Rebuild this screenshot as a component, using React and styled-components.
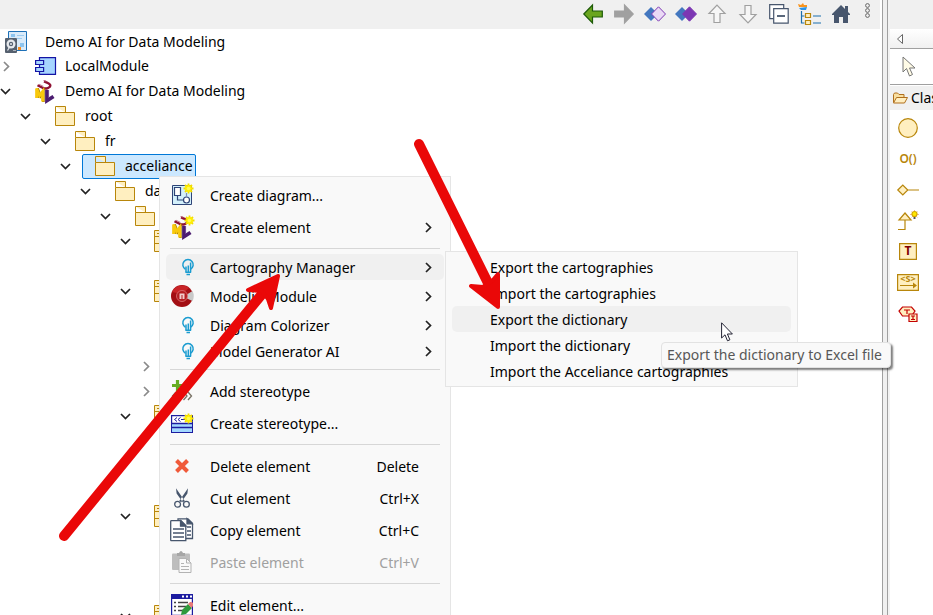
import React from "react";
import styled, { createGlobalStyle } from "styled-components";

const GlobalStyle = createGlobalStyle`
  * { box-sizing: border-box; }
  body {
    margin: 0;
    background: #fff;
    color: #000;
    font: 14px/20px "Noto Sans", "Open Sans", sans-serif;
    overflow: hidden;
  }
  button {
    font: inherit;
    color: inherit;
    background: none;
    border: 0;
    padding: 0;
    margin: 0;
    text-align: left;
  }
  svg { display: block; flex: none; overflow: visible; }
`;

/* ---------- layout ---------- */

const Window = styled.div`
  display: flex;
  height: 100vh;
  position: relative;
  overflow: hidden;
`;

const Explorer = styled.main`
  flex: 1;
  min-width: 0;
  padding-right: 2px;
  overflow: hidden;
`;

const Toolbar = styled.div`
  display: flex;
  justify-content: flex-end;
  height: 29px;
  padding-right: 5px;
  background: #f0f0f0;
`;

const ToolButton = styled.button`
  display: flex;
  align-items: center;
  justify-content: center;
  width: ${(p) => (p.$narrow ? 15 : 31)}px;
  height: ${(p) => (p.$narrow ? 21 : 28)}px;
  margin-left: ${(p) => (p.$narrow ? 4 : 0)}px;
`;

const Splitter = styled.div`
  width: 6px;
  background: #f0f0f0;
  border: solid #a0a0a0;
  border-width: 0 1px;
`;

const Palette = styled.aside`
  width: 45px;
  display: flex;
  flex-direction: column;
  border-left: 2px solid #f3f3f3;
  overflow: hidden;
  white-space: nowrap;
`;

const PaletteTop = styled.div`
  height: 29px;
  background: #f0f0f0;
`;

const PaletteHeader = styled.button`
  height: 20px;
  padding-left: 7px;
  display: flex;
  align-items: center;
  background: linear-gradient(#fff, #f0f0f0);
  border-bottom: 1px solid #a0a0a0;
`;

const SelectTool = styled.button`
  height: 36px;
  padding-left: 12px;
  display: flex;
  align-items: center;
  border-bottom: 1px solid #a0a0a0;
`;

const PaletteDrawer = styled.button`
  height: 24px;
  margin-top: 1px;
  padding-left: 3px;
  display: flex;
  align-items: center;
  gap: 3px;
  background: #f0f0f0;
`;

const PaletteList = styled.div`
  display: flex;
  flex-direction: column;
  padding: 2px 0 0 5px;
`;

const PaletteTool = styled.button`
  display: flex;
  align-items: center;
  justify-content: center;
  width: 26px;
  height: 31px;
`;

/* ---------- tree ---------- */

const Tree = styled.div`
  display: flex;
  flex-direction: column;
`;

const ProjectRow = styled.div`
  display: flex;
  align-items: center;
  gap: 18px;
  height: 25px;
  padding-left: 5px;
`;

const TreeRow = styled.div`
  display: flex;
  align-items: center;
  height: 25px;
  flex: none;
  padding-left: ${(p) => p.$depth * 20}px;
`;

const Toggle = styled.button`
  width: 12px;
  height: 20px;
  margin-right: 10px;
  display: flex;
  align-items: center;
  justify-content: center;
`;

const Node = styled.button`
  display: flex;
  align-items: center;
  gap: 10px;
  height: 25px;
  padding: 0 2px 1px 12px;
  white-space: nowrap;
  border: 1px solid ${(p) => (p.$selected ? "#0078d7" : "transparent")};
  border-radius: 2px;
  background: ${(p) => (p.$selected ? "#cce8ff" : "transparent")};
`;

const NodeIcon = styled.span`
  width: 20px;
  display: flex;
  justify-content: center;
`;

/* ---------- menus ---------- */

const Menu = styled.div`
  position: absolute;
  left: ${(p) => p.$x}px;
  top: ${(p) => p.$y}px;
  width: ${(p) => p.$width}px;
  padding: 2px 6px;
  display: flex;
  flex-direction: column;
  background: #f9f9f9;
  border: 1px solid #e5e5e5;
`;

const MenuItem = styled.button`
  display: flex;
  align-items: center;
  flex: none;
  height: ${(p) => (p.$compact ? 26 : 32)}px;
  padding: ${(p) => (p.$plain ? "2px 13px 0 38px" : "0 12px 0 3px")};
  border-radius: 5px;
  white-space: nowrap;
  background: ${(p) => (p.$active ? "#f0f0f0" : "transparent")};
  &:disabled { color: #a0a0a0; }
`;

const MenuIcon = styled.span`
  width: 26px;
  margin-right: 15px;
  display: flex;
  justify-content: ${(p) => (p.$small ? "flex-end" : "center")};
`;

const MenuLabel = styled.span`
  flex: 1;
  padding-top: 2px;
`;

const Shortcut = styled.span`
  margin-right: 13px;
  padding-top: 2px;
`;

const Separator = styled.div`
  flex: none;
  height: 1px;
  margin: 5px 4px;
  background: #d7d7d7;
`;

const Tooltip = styled.div`
  position: absolute;
  left: 661px;
  top: 342px;
  padding: 2px 8px 2px 5px;
  color: #575757;
  background: #f9f9f9;
  border: 1px solid #e2e2e2;
  border-radius: 4px;
  box-shadow: 2px 2px 2px rgba(0, 0, 0, 0.5);
  white-space: nowrap;
`;

const Pointer = styled.svg`
  position: absolute;
  left: 721px;
  top: 322px;
`;

const Annotations = styled.svg`
  position: absolute;
  left: 0;
  top: 0;
  pointer-events: none;
`;

/* ---------- icons ---------- */

const ChevronDown = () => (
  <svg width="12" height="8" viewBox="0 0 12 8" fill="none" stroke="#222" strokeWidth="1.7">
    <path d="M1 1 5.500 5.500 10 1" />
  </svg>
);
const ChevronRight = ({ color = "#222" }) => (
  <svg width="7" height="11" viewBox="0 0 7 11" fill="none" stroke={color} strokeWidth="1.7">
    <path d="M1 1l4.500 4.500L1 10" />
  </svg>
);
const Folder = () => (
  <svg width="20" height="20" viewBox="0 0 20 20" fill="#ffefc0" stroke="#b8860b">
    <path d="M.5 .5h10v6M.5 .5v6" />
    <path d="M.5 6.500h19v13H.5z" />
  </svg>
);
const ClassBox = () => (
  <svg width="22" height="22" viewBox="0 0 22 22" fill="#ffefc0" stroke="#b8860b">
    <path d="M.5 .5h21v21H.5zM.5 6.500h21M.5 13.500h21" />
    <path d="M3 3.500h3" />
  </svg>
);
const ProjectIcon = () => (
  <svg width="22" height="22" viewBox="0 0 22 22">
    <path d="M3.500 .5h18v19h-18z" fill="#d9ebfa" stroke="#1d70b7" />
    <path d="M6 3h4v3H6zM15 12h4v4h-4z" fill="#8cc4ef" />
    <path d="M12 4h7v1h-7zM12 7h5v1h-5z" fill="#9ccbf0" />
    <path d="M13 16h3v3h-3z" fill="#f58c1f" />
    <rect x="0" y="7" width="12" height="15" rx="1" fill="#56616f" />
    <circle cx="6" cy="13" r="4.500" fill="#e6e9ed" />
    <circle cx="6" cy="13" r="2.200" fill="#56616f" />
    <circle cx="6" cy="13" r="1" fill="#e6e9ed" />
    <path d="M2.500 19.500l2.500-4" stroke="#e6e9ed" strokeWidth="1.200" />
    <path d="M8 19.500h3" stroke="#aeb6bf" />
  </svg>
);
const ModuleIcon = () => (
  <svg width="21" height="18" viewBox="0 0 21 18" fill="#a6d5ff" stroke="#1414a5" strokeWidth="1.200">
    <path d="M4.500 .6h16v16.800h-16z" />
    <path d="M.6 3.500h8v4h-8zM.6 10.500h8v4h-8z" />
  </svg>
);
const Spark = () => (
  <g>
    <path d="M17.500 -.5v10M12.500 4.500h10M14 1l7 7M21 1l-7 7" stroke="#f3dc00" strokeWidth="1.800" />
    <circle cx="17.500" cy="4.500" r="3.400" fill="#ffee00" />
    <circle cx="17.500" cy="4.500" r="1.800" fill="#fffb55" />
  </g>
);
const UmlLogo = ({ spark }) => (
  <svg width="20" height="23" viewBox="0 0 20 23" fill="none">
    <path d="M2.500 5.200 8 8c3 1.300 7.500-.3 7.300-2.800C15.200 3.800 12 2.500 9 1.300" stroke="#8f1233" strokeWidth="2.400" />
    <path d="M4 4.200 8.500 6.400M8.500 .5l3 .8" stroke="#b9637a" strokeWidth=".8" />
    <path d="M2.600 18V8.500l3 7.500 2.800-4.500V22" stroke="#a87f00" strokeWidth="2.600" />
    <path d="M1.600 18V8.500l3 7 3-4V21.500" stroke="#f8c80c" strokeWidth="2.900" />
    <path d="M12 10v10.500l6.500-4" stroke="#4b1c70" strokeWidth="3.800" />
    <path d="M13.600 10v8" stroke="#7c52a0" strokeWidth=".8" />
    {spark && <Spark />}
  </svg>
);
const DiagramIcon = () => (
  <svg width="22" height="22" viewBox="0 0 22 22">
    <path d="M1.500 1.500h19v19h-19z" fill="#d3f0fb" stroke="#2f4478" />
    <g fill="#fff" stroke="#2f4478" strokeWidth="1.200">
      <path d="M3.500 3.500h6v8h-6z" />
      <path d="M6.500 11.500v4.500h6" fill="none" />
      <circle cx="15.500" cy="16" r="3" />
      <path d="M15.500 9v4" stroke="#7d8db4" />
    </g>
    <Spark />
  </svg>
);
const Bulb = () => (
  <svg width="13" height="17" viewBox="0 0 13 17" fill="none" stroke="#1b9cd0">
    <path d="M3.500 10.300a5.200 5.200 0 1 1 5 0" strokeWidth="1.500" />
    <path d="M4 7.500v6M6.300 6.500v7M8.600 3.500v10" strokeWidth="1.500" />
    <path d="M3.500 13.300h5.500M4.500 15.500h3.500" strokeWidth="1.500" />
  </svg>
);
const ModelioIcon = () => (
  <svg width="22" height="22" viewBox="0 0 22 22">
    <circle cx="11" cy="11" r="11" fill="#a30f14" />
    <path d="M1 7A11 11 0 0 1 18 3L11 9z" fill="#c92427" />
    <path d="M15 10l6.500-4a11 11 0 0 1 0 10L15 13z" fill="#c9c9c9" />
    <circle cx="11" cy="11" r="5.500" fill="#b41c20" stroke="#dc7476" strokeWidth=".8" />
    <path d="M8.500 8.500h5v5.500h-1.500v-4h-.5v4h-1v-4h-.5v4H8.500z" fill="#f0cccc" />
  </svg>
);
const AddStereotypeIcon = () => (
  <svg width="22" height="22" viewBox="0 0 22 22" fill="none">
    <path d="M6.500 0v11M1 5.500h11" stroke="#66ad22" strokeWidth="3.200" />
    <path d="M5 12 1.500 16 5 20M9 12l-3.500 4L9 20M12.500 12l3.500 4-3.500 4M17 12l3.500 4-3.500 4" stroke="#777064" strokeWidth="1.300" />
  </svg>
);
const CreateStereotypeIcon = () => (
  <svg width="22" height="19" viewBox="0 0 22 19">
    <path d="M.6 1.600h20.800v16.800H.6z" fill="#fff" stroke="#1c1ca0" strokeWidth="1.200" />
    <path d="M1 9.500h20v8.500H1z" fill="#a3d8ff" />
    <path d="M1 9.500h20M1 13.500h20" stroke="#1c1ca0" strokeWidth="1.300" />
    <path d="M6 3.500 3.500 5.500 6 7.500M9.500 3.500 7 5.500l2.500 2M10 5.500h4" fill="none" stroke="#1c1ca0" />
    <Spark />
  </svg>
);
const DeleteIcon = () => (
  <svg width="16" height="16" viewBox="0 0 16 16" stroke="#f05a3a" strokeWidth="4">
    <path d="M2.500 2.500l11 11M13.500 2.500l-11 11" />
  </svg>
);
const CutIcon = () => (
  <svg width="16" height="20" viewBox="0 0 16 20" fill="none" stroke="#47566d">
    <path d="M2 .3 10.800 13l-2 1.200L2.600 5.500zM14 .3 5.200 13l2 1.200 6.200-8.700z" fill="#47566d" stroke="none" />
    <circle cx="3.600" cy="16.300" r="2.900" strokeWidth="1.300" fill="#f9f9f9" />
    <circle cx="12.400" cy="16.300" r="2.900" strokeWidth="1.300" fill="#f9f9f9" />
  </svg>
);
const CopyIcon = () => (
  <svg width="24" height="24" viewBox="0 0 24 24" fill="#fff" stroke="#47566d" strokeWidth="1.300">
    <path d="M8 .8h10l4.500 4.500v15.200H8z" />
    <path d="M17 .8v5h5z" fill="#47566d" />
    <path d="M17 9h4M17 13h4M17 17h4" strokeWidth="1.600" />
    <path d="M1.500 2.700h9.500l4.800 4.800v15.200H1.500q-.8 0-.8-.8V3.500q0-.8.8-.8z" />
    <path d="M10.500 2.700v5.500h5.300z" fill="#47566d" />
    <path d="M3 11h11M3 15h11M3 19h11" strokeWidth="1.700" />
  </svg>
);
const PasteIcon = () => (
  <svg width="20" height="22" viewBox="0 0 20 22">
    <path d="M1 2.500h16q1 0 1 1V19H1q-1 0-1-1V3.500q0-1 1-1z" fill="#bdbdbd" />
    <path d="M5 5V2h2q2-4 4 0h2v3z" fill="#a6a6a6" />
    <path d="M7 7.500h7.500l4.500 4.500v9.500H7z" fill="#f9f9f9" stroke="#b3b3b3" />
    <path d="M14.500 7.500V12H19M9 12.500h3M9 15.500h8M9 18.500h8" fill="none" stroke="#b3b3b3" />
  </svg>
);
const EditIcon = () => (
  <svg width="22" height="22" viewBox="0 0 22 22">
    <path d="M.6 .6h20.800v20.800H.6z" fill="#fff" stroke="#1c1ca0" strokeWidth="1.200" />
    <path d="M0 0h22v5H0z" fill="#1c1ca0" />
    <path d="M11 1.500h2v2h-2zM15 1.500h2v2h-2zM19 1.500h2v2h-2z" fill="#fff" />
    <path d="M3 8.500h2M7 8.500h10M3 12.500h2M7 12.500h8M3 16.500h2M7 16.500h5" stroke="#444" strokeWidth="1.700" />
    <path d="M10 21l1-5 6-6 4 4-6 6z" fill="#2f9a3c" />
    <path d="M17 10l2-2q2-.5 3 1v3l-1.500 2z" fill="#e87979" />
  </svg>
);

const Arrow = ({ fill, stroke, turn = 0 }) => (
  <svg width="20" height="20" viewBox="0 0 20 20">
    <path
      d="M.8 10 9.500 1v6h9.800v6H9.500V19z"
      transform={`rotate(${turn} 10 10)`}
      fill={fill}
      stroke={stroke}
      strokeWidth="1.200"
    />
  </svg>
);
const ThinArrow = ({ turn = 0 }) => (
  <svg width="18" height="20" viewBox="0 0 18 20">
    <path
      d="M9 1.200 17 9.500h-5v9H6v-9H1z"
      transform={`rotate(${turn} 9 10)`}
      fill="#f6f6f6"
      stroke="#a0a0a0"
      strokeWidth="1.200"
    />
  </svg>
);
const Diamonds = ({ fill }) => (
  <svg width="22" height="16" viewBox="0 0 22 16">
    <path d="M0 8l7-7 7 7-7 7z" fill="#4377bf" />
    <path d="M7.500 8 14.500 .8l7 7.200-7 7.200z" fill={fill} stroke="#7c37b3" />
  </svg>
);
const CollapseIcon = () => (
  <svg width="20" height="20" viewBox="0 0 20 20" fill="#fff" stroke="#47566d" strokeWidth="1.200">
    <path d="M.7 .7h14v14h-14z" />
    <path d="M4.700 4.700h14.500v14.500H4.700z" />
    <path d="M8 12h8" strokeWidth="1.800" />
  </svg>
);
const TreeIcon = () => (
  <svg width="23" height="22" viewBox="0 0 23 22" fill="none">
    <path d="M0 1l3 1 2-2 1 2h3v2H1z" fill="#f7931e" />
    <path d="M1 5l8-1-1 3H3z" fill="#2a93e8" />
    <path d="M3.500 8v12h3M3.500 13h3M15 13h8M15 20h8" stroke="#1b6fae" strokeWidth="1.200" />
    <path d="M7.500 10.500h5v4h-5zM7.500 17.500h5v4h-5z" fill="#ffefc0" stroke="#b8860b" strokeWidth="1.200" />
  </svg>
);
const HomeIcon = () => (
  <svg width="18" height="18" viewBox="0 0 18 18" fill="#47566d">
    <path d="M9 0l4 4V1h3v6l2 2v1h-2v8h-5v-6H7v6H2v-8H0V9z" />
  </svg>
);
const MoreIcon = () => (
  <svg width="5" height="15" viewBox="0 0 5 15" fill="none" stroke="#666">
    <circle cx="2.500" cy="2.500" r="1.900" />
    <circle cx="2.500" cy="7.500" r="1.900" />
    <circle cx="2.500" cy="12.500" r="1.900" />
  </svg>
);

const PaletteText = styled.text`
  font-family: "Noto Sans", sans-serif;
  font-size: ${(p) => p.$size}px;
  font-weight: ${(p) => p.$weight || 700};
  text-anchor: middle;
`;

const InstanceIcon = () => (
  <svg width="20" height="20" viewBox="0 0 20 20">
    <circle cx="10" cy="10" r="9.300" fill="#ffefc0" stroke="#b8860b" strokeWidth="1.200" />
  </svg>
);
const OperationIcon = () => (
  <svg width="20" height="16" viewBox="0 0 20 16" fill="#b8860b">
    <PaletteText $size={12} $weight={600} x="10" y="12">O()</PaletteText>
  </svg>
);
const AssociationIcon = () => (
  <svg width="22" height="12" viewBox="0 0 22 12" fill="#ffefc0" stroke="#b8860b" strokeWidth="1.200">
    <path d="M.8 6l5-5 5 5-5 5zM11 6h11" />
  </svg>
);
const GeneralizationIcon = () => (
  <svg width="22" height="22" viewBox="0 0 22 22" fill="none" stroke="#b8860b" strokeWidth="1.200">
    <path d="M8 3 14 10H2z" fill="#ffefc0" />
    <path d="M8 10v9.500H1" />
    <path d="M17.500 0v9M13 4.500h9M14.500 1.500l6 6M20.500 1.500l-6 6" stroke="#e3a38a" strokeWidth=".8" />
    <circle cx="17.500" cy="4" r="2.500" fill="#ffe800" stroke="#d5a900" />
    <path d="M16.500 8h2" stroke="#555" strokeWidth="2" />
  </svg>
);
const TemplateIcon = () => (
  <svg width="18" height="17" viewBox="0 0 18 17">
    <path d="M.6 .6h16.800v15.800H.6z" fill="#ffefc0" stroke="#b8860b" strokeWidth="1.200" />
    <PaletteText $size={12} x="9" y="12" fill="#800000">T</PaletteText>
  </svg>
);
const StereotypeLinkIcon = () => (
  <svg width="22" height="17" viewBox="0 0 22 17">
    <path d="M.6 .6h20.800v15.800H.6z" fill="#ffefc0" stroke="#b8860b" strokeWidth="1.200" />
    <PaletteText $size={9} x="11" y="8" fill="#b8860b">&lt;S&gt;</PaletteText>
    <path d="M3 11.500h14" stroke="#b8860b" />
    <path d="M16 8.500l4 3-4 3z" fill="#b8860b" />
  </svg>
);
const TaggedIcon = () => (
  <svg width="20" height="16" viewBox="0 0 20 16" stroke="#c40000" strokeWidth="1.200" fill="#ffefc0">
    <path d="M4.500 1h9l3.500 4-3.500 5h-9L1 5z" />
    <path d="M6 4h6M9 4v4" />
    <path d="M11 8h8v7.500h-8zM13 10h4M15 10v4M13 13.500h4" />
  </svg>
);
const OpenFolderIcon = () => (
  <svg width="15" height="12" viewBox="0 0 15 12" fill="#f8dfa0" stroke="#b06f1c">
    <path d="M.5 10.500v-8l1-1.500h3l1.500 1.500h5v3" />
    <path d="M.5 11l3-5.500h11l-3 5.500z" fill="#ffeec0" />
  </svg>
);

/* ---------- data ---------- */

const treeRows = [
  { depth: 0, state: "closed", icon: <ModuleIcon />, label: "LocalModule" },
  { depth: 0, state: "open", icon: <UmlLogo />, label: "Demo AI for Data Modeling" },
  { depth: 1, state: "open", icon: <Folder />, label: "root" },
  { depth: 2, state: "open", icon: <Folder />, label: "fr" },
  { depth: 3, state: "open", icon: <Folder />, label: "acceliance", selected: true },
  { depth: 4, state: "open", icon: <Folder />, label: "data" },
  { depth: 5, state: "open", icon: <Folder /> },
  { depth: 6, state: "open", icon: <ClassBox /> },
  { depth: 7 },
  { depth: 6, state: "open", icon: <ClassBox /> },
  { depth: 7 },
  { depth: 7 },
  { depth: 7, state: "closed" },
  { depth: 7, state: "closed" },
  { depth: 6, state: "open", icon: <ClassBox /> },
  { depth: 7 },
  { depth: 7 },
  { depth: 7 },
  { depth: 6, state: "open", icon: <ClassBox /> },
  { depth: 7 },
  { depth: 7 },
  { depth: 7 },
  { depth: 6, state: "open", icon: <ClassBox /> },
];

const menuSections = [
  [
    { icon: <DiagramIcon />, label: "Create diagram..." },
    { icon: <UmlLogo spark />, label: "Create element", sub: true },
  ],
  [
    { icon: <Bulb />, small: true, label: "Cartography Manager", sub: true, active: true },
    { icon: <ModelioIcon />, label: "Modelio Module", sub: true },
    { icon: <Bulb />, small: true, label: "Diagram Colorizer", sub: true },
    { icon: <Bulb />, small: true, label: "Model Generator AI", sub: true },
  ],
  [
    { icon: <AddStereotypeIcon />, label: "Add stereotype" },
    { icon: <CreateStereotypeIcon />, label: "Create stereotype..." },
  ],
  [
    { icon: <DeleteIcon />, label: "Delete element", keys: "Delete" },
    { icon: <CutIcon />, label: "Cut element", keys: "Ctrl+X" },
    { icon: <CopyIcon />, label: "Copy element", keys: "Ctrl+C" },
    { icon: <PasteIcon />, label: "Paste element", keys: "Ctrl+V", disabled: true },
  ],
  [{ icon: <EditIcon />, label: "Edit element..." }],
];

const submenuItems = [
  "Export the cartographies",
  "Import the cartographies",
  "Export the dictionary",
  "Import the dictionary",
  "Import the Acceliance cartographies",
];

const tools = [
  ["Back", <Arrow fill="#6aa51e" stroke="#1d5a08" />],
  ["Forward", <Arrow fill="#a0a0a0" stroke="#a0a0a0" turn={180} />],
  ["Previous diagram", <Diamonds fill="#ead9f5" />],
  ["Next diagram", <Diamonds fill="#7c37b3" />],
  ["Move up", <ThinArrow />],
  ["Move down", <ThinArrow turn={180} />],
  ["Collapse all", <CollapseIcon />],
  ["Show hierarchy", <TreeIcon />],
  ["Home", <HomeIcon />],
];

const paletteTools = [
  ["Instance", <InstanceIcon />],
  ["Operation", <OperationIcon />],
  ["Association", <AssociationIcon />],
  ["Generalization", <GeneralizationIcon />],
  ["Template parameter", <TemplateIcon />],
  ["Stereotype link", <StereotypeLinkIcon />],
  ["Tagged value", <TaggedIcon />],
];

export default function App() {
  return (
    <Window>
      <GlobalStyle />
      <Explorer>
        <Toolbar role="toolbar">
          {tools.map(([name, icon]) => (
            <ToolButton key={name} aria-label={name}>{icon}</ToolButton>
          ))}
          <ToolButton $narrow aria-label="View menu"><MoreIcon /></ToolButton>
        </Toolbar>
        <Tree>
          <ProjectRow>
            <ProjectIcon />
            <span>Demo AI for Data Modeling</span>
          </ProjectRow>
          {treeRows.map((row, i) => (
            <TreeRow key={i} $depth={row.depth}>
              {row.state && (
                <Toggle aria-label={row.state === "open" ? "Collapse" : "Expand"}>
                  {row.state === "open" ? <ChevronDown /> : <ChevronRight color="#8a8a8a" />}
                </Toggle>
              )}
              {row.icon && (
                <Node $selected={row.selected} aria-label={row.label ? undefined : "Element"}>
                  <NodeIcon>{row.icon}</NodeIcon>
                  {row.label}
                </Node>
              )}
            </TreeRow>
          ))}
        </Tree>
      </Explorer>
      <Splitter />
      <Palette>
        <PaletteTop />
        <PaletteHeader aria-label="Collapse palette">
          <svg width="6" height="10" viewBox="0 0 6 10" fill="#fff" stroke="#666">
            <path d="M5.500 .5v9L.5 5z" />
          </svg>
        </PaletteHeader>
        <SelectTool aria-label="Select">
          <svg width="14" height="21" viewBox="0 0 14 21" fill="#fffbe6" stroke="#777">
            <path d="M1 1v15l3.500-3.500L7.500 20l3-1.500-3-6.500H13z" />
          </svg>
        </SelectTool>
        <PaletteDrawer>
          <OpenFolderIcon />
          Class
        </PaletteDrawer>
        <PaletteList>
          {paletteTools.map(([name, icon]) => (
            <PaletteTool key={name} aria-label={name}>{icon}</PaletteTool>
          ))}
        </PaletteList>
      </Palette>

      <Menu $x={159} $y={176} $width={292} role="menu">
        {menuSections.map((items, s) => (
          <React.Fragment key={s}>
            {s > 0 && <Separator />}
            {items.map((item) => (
              <MenuItem
                key={item.label}
                role="menuitem"
                $compact={item.small}
                $active={item.active}
                disabled={item.disabled}
              >
                <MenuIcon $small={item.small}>{item.icon}</MenuIcon>
                <MenuLabel>{item.label}</MenuLabel>
                {item.keys && <Shortcut>{item.keys}</Shortcut>}
                {item.sub && <ChevronRight />}
              </MenuItem>
            ))}
          </React.Fragment>
        ))}
      </Menu>

      <Menu $x={445} $y={251} $width={353} role="menu">
        {submenuItems.map((label) => (
          <MenuItem key={label} role="menuitem" $compact $plain $active={label === "Export the dictionary"}>
            {label}
          </MenuItem>
        ))}
      </Menu>

      <Tooltip role="tooltip">Export the dictionary to Excel file</Tooltip>
      <Pointer width="13" height="20" viewBox="0 0 13 20" fill="#fff" stroke="#222233">
        <path d="M.6 .8v15.200l3.400-3.200 2.500 6 2.400-1-2.500-5.800h5z" />
      </Pointer>

      <Annotations width="520" height="560" viewBox="0 0 520 560" fill="#ea0808" stroke="#ea0808" strokeLinejoin="round" strokeLinecap="round">
        <path d="M64 536 267 288M419 144l71 143" strokeWidth="10" />
        <path d="M278 276 248 290l14 1 6 8 3 9zM498 307l-27-21 12 1 10-7 5-6z" strokeWidth="4" />
      </Annotations>
    </Window>
  );
}
